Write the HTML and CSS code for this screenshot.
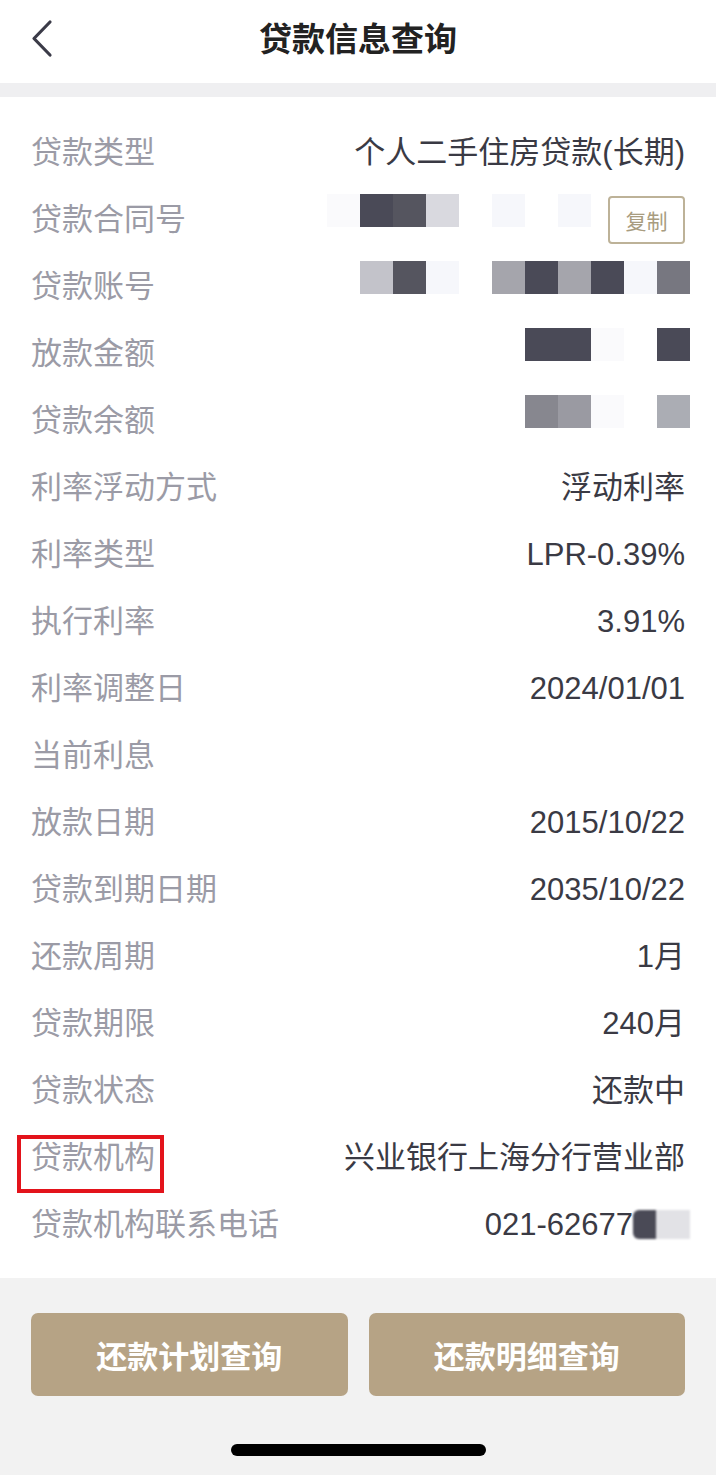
FILE: index.html
```html
<!DOCTYPE html>
<html lang="zh-CN">
<head>
    <meta charset="UTF-8">
    <meta name="viewport" content="width=device-width, initial-scale=1.0">
    <title>贷款信息查询</title>
    <link rel="stylesheet" href="styles.css">
</head>
<body>
    <div class="header">
        <a class="back" href="#">
            <svg width="24" height="40" viewBox="0 0 24 40">
                <path d="M20 3 L4 19.5 L20 36" fill="none" stroke="#3b3b48" stroke-width="3.2" stroke-linecap="round" stroke-linejoin="round"/>
            </svg>
        </a>
        <h1>贷款信息查询</h1>
    </div>
    <div class="band"></div>

    <div class="info">
        <div class="row">
            <span class="label">贷款类型</span>
            <span class="value">个人二手住房贷款(长期)</span>
        </div>
        <div class="row">
            <span class="label">贷款合同号</span>
            <span class="value masked">
                <span class="cells">
                    <i class="c-f2"></i><i class="c-d"></i><i class="c-d2"></i><i class="c-l"></i><i></i><i class="c-f"></i><i></i><i class="c-f"></i>
                </span>
                <button class="copy">复制</button>
            </span>
        </div>
        <div class="row">
            <span class="label">贷款账号</span>
            <span class="value masked edge">
                <span class="cells">
                    <i class="c-l2"></i><i class="c-d2"></i><i class="c-f"></i><i></i><i class="c-m"></i><i class="c-d"></i><i class="c-m"></i><i class="c-d"></i><i class="c-f"></i><i class="c-m2"></i>
                </span>
            </span>
        </div>
        <div class="row">
            <span class="label">放款金额</span>
            <span class="value masked edge">
                <span class="cells">
                    <i class="c-d"></i><i class="c-d"></i><i class="c-f2"></i><i></i><i class="c-d"></i>
                </span>
            </span>
        </div>
        <div class="row">
            <span class="label">贷款余额</span>
            <span class="value masked edge">
                <span class="cells">
                    <i class="c-g1"></i><i class="c-g2"></i><i class="c-f2"></i><i></i><i class="c-g3"></i>
                </span>
            </span>
        </div>
        <div class="row">
            <span class="label">利率浮动方式</span>
            <span class="value">浮动利率</span>
        </div>
        <div class="row">
            <span class="label">利率类型</span>
            <span class="value">LPR-0.39%</span>
        </div>
        <div class="row">
            <span class="label">执行利率</span>
            <span class="value">3.91%</span>
        </div>
        <div class="row">
            <span class="label">利率调整日</span>
            <span class="value">2024/01/01</span>
        </div>
        <div class="row">
            <span class="label">当前利息</span>
            <span class="value"></span>
        </div>
        <div class="row">
            <span class="label">放款日期</span>
            <span class="value">2015/10/22</span>
        </div>
        <div class="row">
            <span class="label">贷款到期日期</span>
            <span class="value">2035/10/22</span>
        </div>
        <div class="row">
            <span class="label">还款周期</span>
            <span class="value">1月</span>
        </div>
        <div class="row">
            <span class="label">贷款期限</span>
            <span class="value">240月</span>
        </div>
        <div class="row">
            <span class="label">贷款状态</span>
            <span class="value">还款中</span>
        </div>
        <div class="row">
            <span class="label marked">贷款机构</span>
            <span class="value">兴业银行上海分行营业部</span>
        </div>
        <div class="row">
            <span class="label">贷款机构联系电话</span>
            <span class="value phone">021-62677<span class="tail"><i class="t-d"></i><i class="t-l"></i></span></span>
        </div>
    </div>

    <div class="actions">
        <div class="buttons">
            <button class="action">还款计划查询</button>
            <button class="action">还款明细查询</button>
        </div>
        <div class="home-bar"></div>
    </div>
</body>
</html>
```

FILE: styles.css
```css
body {
    font-family: "Liberation Sans", "Noto Sans CJK SC", sans-serif;
    background-color: #f2f2f2;
    margin: 0;
    padding: 0;
    width: 716px;
}

.header {
    height: 83px;
    background-color: #fff;
    display: flex;
    align-items: center;
    justify-content: center;
    position: relative;
}
.back {
    position: absolute;
    left: 30px;
    top: 19px;
    display: block;
}
.header h1 {
    margin: 0;
    font-size: 33px;
    font-weight: 700;
    color: #222;
    line-height: 1;
    padding-bottom: 4px;
}

.band {
    height: 14px;
    background-color: #efeff1;
}

.info {
    background-color: #fff;
    padding: 22px 31px 20px 31px;
}
.row {
    height: 67px;
    display: flex;
    align-items: center;
    justify-content: space-between;
    font-size: 31px;
}
.label {
    color: #9b9ba6;
    line-height: 40px;
}
.value {
    color: #3a3a44;
    line-height: 40px;
    white-space: nowrap;
}

.masked {
    display: flex;
    align-items: center;
}
.masked.edge {
    margin-right: -5px;
}
.cells {
    display: flex;
    margin-bottom: 18px;
    filter: blur(0.6px);
}
.cells i {
    display: block;
    width: 33px;
    height: 33px;
}
.c-d { background-color: #4a4a57; }
.c-d2 { background-color: #55555f; }
.c-l { background-color: #d9d9df; }
.c-l2 { background-color: #c3c3ca; }
.c-m { background-color: #a5a5ac; }
.c-m2 { background-color: #777780; }
.c-f { background-color: #f6f7fb; }
.c-f2 { background-color: #fafafc; }
.c-g1 { background-color: #87878f; }
.c-g2 { background-color: #9a9aa2; }
.c-g3 { background-color: #abadb4; }

.copy {
    margin-left: 17px;
    width: 77px;
    height: 48px;
    border: 2px solid #bdb298;
    border-radius: 4px;
    background-color: #fff;
    color: #a89c80;
    font-family: "Noto Sans CJK SC", sans-serif;
    font-size: 21px;
    padding: 0;
}

.phone {
    display: flex;
    align-items: center;
    margin-right: -5px;
}
.tail {
    display: flex;
    filter: blur(0.8px);
}
.tail i {
    display: block;
    height: 29px;
}
.t-d {
    width: 23px;
    background-color: #4a4a56;
    border-radius: 6px 0 0 6px;
}
.t-l {
    width: 34px;
    background-color: #e2e2e6;
}

.marked {
    position: relative;
}
.marked::after {
    content: "";
    position: absolute;
    left: -14px;
    right: -9px;
    top: -3px;
    bottom: -15px;
    border: 4px solid #e3131b;
}

.actions {
    padding: 35px 31px 0 31px;
    height: 162px;
}
.buttons {
    display: flex;
    gap: 21px;
}
.action {
    flex: 1;
    height: 83px;
    border: none;
    border-radius: 7px;
    background-color: #b6a385;
    color: #fff;
    font-family: "Noto Sans CJK SC", sans-serif;
    font-size: 31px;
    font-weight: 700;
    padding: 0;
}
.home-bar {
    width: 255px;
    height: 12px;
    margin: 48px auto 0 auto;
    background-color: #000;
    border-radius: 6px;
}
```
